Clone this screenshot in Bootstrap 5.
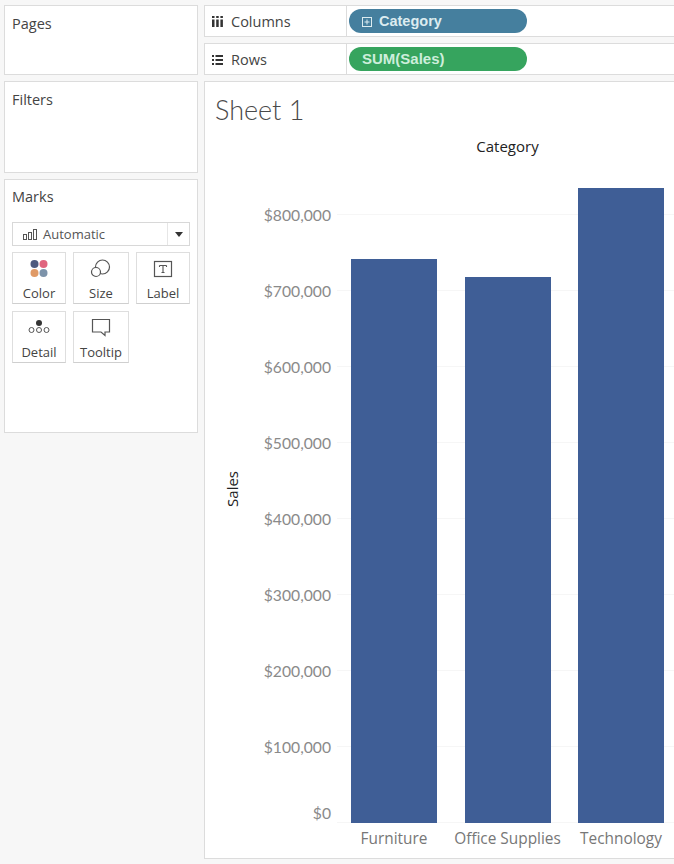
<!DOCTYPE html>
<html lang="en">
<head>
<meta charset="utf-8">
<title>Sheet 1</title>
<link rel="stylesheet" href="https://cdn.jsdelivr.net/npm/bootstrap@5.3.0/dist/css/bootstrap.min.css">
<style>
html,body{height:864px;overflow:hidden}
body{background:#f7f7f7;font-family:"Open Sans","Liberation Sans",sans-serif;color:#444;padding:5px 0 0 4px}
.wb-side{width:194px;flex:none;gap:6px}
.wb-main{width:480px;flex:none;gap:6px}
.wb-panel{background:#fff;border:1px solid #dcdcdc;padding:8px 7px;font-size:14.5px;line-height:20px;color:#444}
.wb-pages{height:70px}
.wb-filters{height:92px}
.wb-marks{height:254px;padding-top:7px}
.wb-select{height:24px;margin-top:15px;border:1px solid #d8d8d8;background:#fff;font-size:13px;color:#555;padding-left:10px}
.wb-select svg{margin-right:6px}
.wb-caret{width:22px;height:100%;margin-left:auto;border-left:1px solid #e6e6e6}
.wb-caret i{display:block;border:4.5px solid transparent;border-top:5px solid #333;border-bottom:0}
.wb-grid{display:grid;grid-template-columns:54px 56px 54px;column-gap:7px;row-gap:7px;margin-top:6px}
.wb-tile{height:52px;border:1px solid #dedede;border-bottom-color:#cfcfcf;background:#fff;font-size:13px;line-height:16px;color:#444;padding-top:5px}
.wb-tile svg{display:block;height:24px;margin-bottom:3px}
.wb-shelf{height:32px;background:#fff;border:1px solid #dcdcdc;border-right:0}
.wb-shelf-name{width:142px;flex:none;height:100%;border-right:1px solid #dcdcdc;font-size:14.5px;color:#444;padding-left:7px;gap:8px;padding-top:1px}
.wb-pill{width:178px;height:24px;margin-left:2px;border-radius:12px;font-family:"Liberation Sans",sans-serif;font-weight:700;font-size:14.5px;padding:1px 0 0 13px}
.wb-dim{background:#457f9e;gap:7px;color:#dcecf0}
.wb-mea{background:#36a45e;color:#cdeedb;font-size:15px}
.wb-sheet{background:#fff;border:1px solid #dcdcdc;border-right:0;height:778px}
.wb-title{font-family:"Lato","Open Sans",sans-serif;font-weight:300;font-size:27px;line-height:30px;color:#4a4a4a;margin:13px 0 0 10px}
.wb-head{width:313px;margin:11px 0 21px 146px;font-size:15px;line-height:20px;font-weight:500;color:#222;text-align:center}
.wb-sales{width:28px;margin-left:13px;padding-bottom:22px;font-size:15px;font-weight:500;color:#222}
.wb-sales span{writing-mode:vertical-rl;transform:rotate(180deg)}
.wb-axis{width:85px;height:646px;font-family:"Lato","Open Sans",sans-serif;font-size:15.7px;color:#8a8a8a;text-align:right}
.wb-tick{height:76px;line-height:76px}
.wb-zero{height:38px;line-height:20px}
.wb-plot{height:646px;margin-left:6px;padding-left:14px;gap:27.5px;flex:1;background-image:linear-gradient(to top,#f6f6f6 1px,transparent 1px);background-size:100% 76px;background-position:0 bottom}
.wb-bar{width:86px;background:#3f5e96;flex:none}
.wb-cats{margin-left:146px;height:32px;gap:27.5px;font-size:15.4px;color:#777;line-height:32px}
.wb-cats div{width:86px;flex:none;white-space:nowrap}
</style>
</head>
<body>
<div class="d-flex align-items-start" style="gap:6px;width:680px">
  <div class="wb-side d-flex flex-column">
    <div class="wb-panel wb-pages">Pages</div>
    <div class="wb-panel wb-filters">Filters</div>
    <div class="wb-panel wb-marks">
      <div>Marks</div>
      <div class="wb-select d-flex align-items-center">
        <svg width="14" height="11" viewBox="0 0 14 11" fill="none" stroke="#555"><rect x=".5" y="5.5" width="3" height="5"/><rect x="5.5" y="3.5" width="3" height="7"/><rect x="10.5" y=".5" width="3" height="10"/></svg>
        <span>Automatic</span>
        <span class="wb-caret d-flex align-items-center justify-content-center"><i></i></span>
      </div>
      <div class="wb-grid">
        <div class="wb-tile text-center">
          <svg class="mx-auto" width="20" height="24" viewBox="0 0 20 24"><circle cx="5.5" cy="6" r="4" fill="#4e5a7e"/><circle cx="14.5" cy="6" r="4" fill="#e0657f"/><circle cx="5.5" cy="15" r="4" fill="#e09a66"/><circle cx="14.5" cy="15" r="4" fill="#7d93aa"/></svg>
          Color</div>
        <div class="wb-tile text-center">
          <svg class="mx-auto" width="22" height="24" viewBox="0 0 22 24" fill="none" stroke="#555" stroke-width="1.2"><circle cx="12.5" cy="9" r="7"/><circle cx="6" cy="14" r="4.5" fill="#fff"/></svg>
          Size</div>
        <div class="wb-tile text-center">
          <svg class="mx-auto" width="20" height="24" viewBox="0 0 20 24" fill="none" stroke="#555"><rect x="1.5" y="3.5" width="17" height="15" stroke-width="1.2"/><path d="M6.5 7.5h7M10 7.5v7M8.5 14.5h3M6.5 7.5v1.5M13.5 7.5v1.5" stroke-width="1.1"/></svg>
          Label</div>
        <div class="wb-tile text-center">
          <svg class="mx-auto" width="22" height="24" viewBox="0 0 22 24" fill="none" stroke="#555"><circle cx="11" cy="6" r="3" fill="#333" stroke="none"/><circle cx="3.5" cy="13" r="2.5"/><circle cx="11" cy="13" r="2.5"/><circle cx="18.5" cy="13" r="2.5"/></svg>
          Detail</div>
        <div class="wb-tile text-center">
          <svg class="mx-auto" width="20" height="24" viewBox="0 0 20 24" fill="none" stroke="#555" stroke-width="1.2"><path d="M1.5 2.5h17v12.5h-4.5v3.5l-4-3.5H1.5z"/></svg>
          Tooltip</div>
      </div>
    </div>
  </div>
  <div class="wb-main d-flex flex-column">
    <div class="wb-shelf d-flex align-items-center">
      <div class="wb-shelf-name d-flex align-items-center">
        <svg width="11" height="11" viewBox="0 0 11 11" fill="#333"><path d="M0 0h2.5v2H0zM4.2 0h2.5v2H4.2zM8.4 0h2.5v2H8.4zM0 3.5h2.5V11H0zM4.2 3.5h2.5V11H4.2zM8.4 3.5h2.5V11H8.4z"/></svg>
        <span>Columns</span>
      </div>
      <div class="wb-pill wb-dim d-flex align-items-center">
        <svg width="10" height="10" viewBox="0 0 10 10" fill="none" stroke="#dcecf0"><rect x=".5" y=".5" width="9" height="9"/><path d="M2.5 5h5M5 2.5v5"/></svg>
        <span>Category</span>
      </div>
    </div>
    <div class="wb-shelf d-flex align-items-center">
      <div class="wb-shelf-name d-flex align-items-center">
        <svg width="11" height="10" viewBox="0 0 11 10" fill="#333"><path d="M0 0h2v2H0zM3.5 0H11v2H3.5zM0 4h2v2H0zM3.5 4H11v2H3.5zM0 8h2v2H0zM3.5 8H11v2H3.5z"/></svg>
        <span>Rows</span>
      </div>
      <div class="wb-pill wb-mea d-flex align-items-center"><span>SUM(Sales)</span></div>
    </div>
    <div class="wb-sheet">
      <div class="wb-title">Sheet 1</div>
      <div class="wb-head">Category</div>
      <div class="d-flex">
        <div class="wb-sales d-flex align-items-center justify-content-center"><span>Sales</span></div>
        <div class="wb-axis">
          <div class="wb-tick">$800,000</div>
          <div class="wb-tick">$700,000</div>
          <div class="wb-tick">$600,000</div>
          <div class="wb-tick">$500,000</div>
          <div class="wb-tick">$400,000</div>
          <div class="wb-tick">$300,000</div>
          <div class="wb-tick">$200,000</div>
          <div class="wb-tick">$100,000</div>
          <div class="wb-zero d-flex align-items-end justify-content-end">$0</div>
        </div>
        <div class="wb-plot d-flex align-items-end">
          <div class="wb-bar" style="height:564px"></div>
          <div class="wb-bar" style="height:546px"></div>
          <div class="wb-bar" style="height:635px"></div>
        </div>
      </div>
      <div class="wb-cats d-flex">
        <div class="d-flex justify-content-center">Furniture</div>
        <div class="d-flex justify-content-center">Office Supplies</div>
        <div class="d-flex justify-content-center">Technology</div>
      </div>
    </div>
  </div>
</div>
<script src="https://cdn.jsdelivr.net/npm/bootstrap@5.3.0/dist/js/bootstrap.bundle.min.js"></script>
</body>
</html>
